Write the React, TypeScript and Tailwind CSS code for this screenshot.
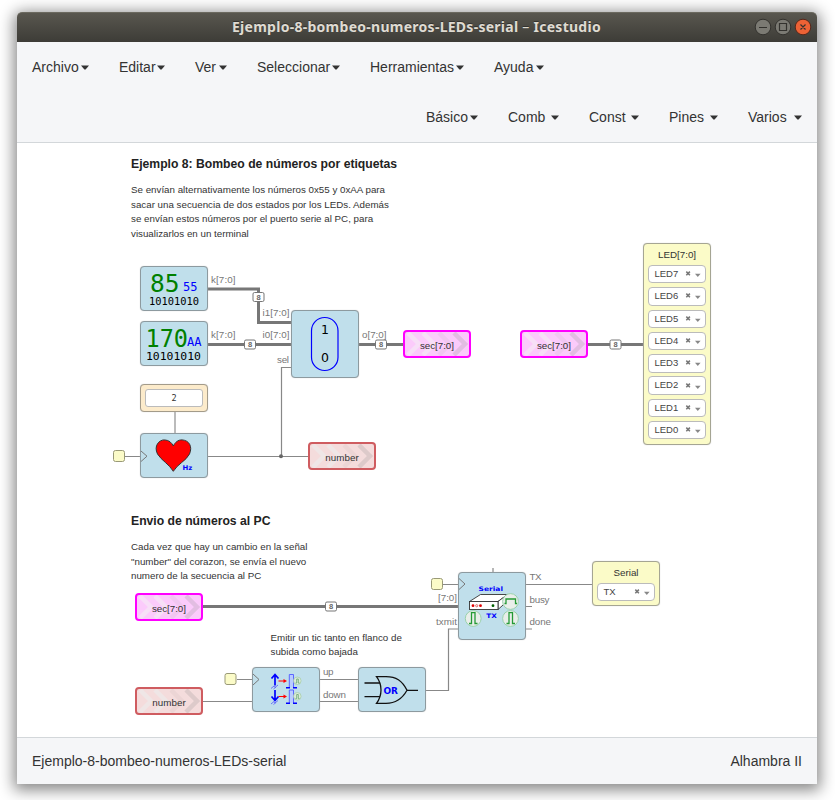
import React from "react";

const SANS = "font-['Liberation_Sans',Arial,sans-serif]";

function Menu({ label, className = "" }: { label: string; className?: string }) {
  return (
    <button className={`flex items-center whitespace-nowrap ${className}`}>
      <span>{label}</span>
      <svg width="8" height="5" className="-mt-px ml-auto block">
        <path d="M0 0.5H8L4.6 4.5H3.4Z" fill="#333" />
      </svg>
    </button>
  );
}

function Block({ className, children }: { className: string; children?: React.ReactNode }) {
  return (
    <div className={`absolute w-[68px] overflow-hidden rounded border border-[#8d9a9f] bg-[#c0dfeb] shadow-[0_0_1px_#c0c0c0] ${className}`}>
      {children}
    </div>
  );
}

function ConstValue({ dec, hex, x, hexX, decW, hexW, binX, binW }: { dec: string; hex: string; x: number; hexX: number; decW: number; hexW: number; binX: number; binW: number }) {
  return (
    <svg width="66" height="43" className="block font-['DejaVu_Sans_Mono','Noto_Sans',monospace]">
      <text x={x} y="24.7" fontSize="24" fill="#008000" textLength={decW} lengthAdjust="spacingAndGlyphs">{dec}</text>
      <text x={hexX} y="24" fontSize="12.5" fill="#0000ff" textLength={hexW} lengthAdjust="spacingAndGlyphs">{hex}</text>
      <text x={binX} y="38" fontSize="11" fill="#000" textLength={binW} lengthAdjust="spacingAndGlyphs">10101010</text>
    </svg>
  );
}

function Label({ text, tone, className }: { text: string; tone: "pink" | "red"; className: string }) {
  const pink = tone === "pink";
  return (
    <div className={`absolute h-7 w-[68px] overflow-hidden rounded border-2 ${pink ? "border-[#ff00ff] bg-[#fbcbfb]" : "border-[#cf5c60] bg-[#f4dcdc]"} ${className}`}>
      <svg width="64" height="24" className="block" fill="none" strokeWidth="4.5">
        <path d="M3 1L14 12L3 23M18 1L29 12L18 23" stroke={pink ? "#f7dff7" : "#efe6e6"} />
        <path d="M34 1L45 12L34 23" stroke={pink ? "#f1c6f1" : "#ecd5d5"} />
        <path d="M49 1L60 12L49 23" stroke={pink ? "#e2bde2" : "#ddcaca"} />
        <text x="32" y="17" textAnchor="middle" fontSize="9.8" fill="#333" textLength={pink ? 34 : 33.5}>{text}</text>
      </svg>
    </div>
  );
}

function Select({ value }: { value: string }) {
  return (
    <div className="flex h-[18.4px] w-[58px] items-center rounded border border-[#bbb] bg-white pl-[5.5px] pr-[3px] text-[9.5px] text-[#444]">
      <span className="flex-1">{value}</span>
      <svg width="17" height="8" className="block">
        <path d="M1.3 1.6l3.6 3.6M4.9 1.6L1.3 5.2" stroke="#777" strokeWidth="1.5" />
        <path d="M10 3.8h5.6L12.8 7z" fill="#888" />
      </svg>
    </div>
  );
}

function Pin({ x, y }: { x: number; y: number }) {
  return <rect x={x} y={y} width="11" height="11" rx="2" fill="#fbfbc8" stroke="#999977" />;
}

function Bus({ x, y }: { x: number; y: number }) {
  return (
    <g>
      <rect x={x - 5.5} y={y - 4.5} width="11" height="9" rx="1.5" fill="#fff" stroke="#777" />
      <text x={x} y={y + 2.8} fontSize="7.5" fontWeight="bold" fill="#666" textAnchor="middle">8</text>
    </g>
  );
}

const ports: [string, number, number, number][] = [
  ["k[7:0]", 211, 283, 24.5],
  ["k[7:0]", 211, 338, 24.5],
  ["i1[7:0]", 262.5, 316, 27],
  ["i0[7:0]", 262.5, 338, 27],
  ["sel", 277, 363, 12],
  ["o[7:0]", 362, 338, 24.5],
  ["TX", 529.5, 580, 12],
  ["busy", 529.5, 603, 20],
  ["done", 529.5, 625, 21.5],
  ["[7:0]", 438, 601, 19],
  ["txmit", 436, 625, 21],
  ["up", 323, 675, 10.5],
  ["down", 323, 698, 23],
];

function Wires() {
  return (
    <svg width="835" height="800" className="absolute inset-0">
      <g fill="none" stroke="#777" strokeWidth="3">
        <path d="M208 289H258.5V322.5H292M208 344.5H292M358 344.5H404M587 344.5H644M202 606.5H459" />
      </g>
      <g fill="none" stroke="#888" strokeWidth="1.2">
        <path d="M125 456.5H141M208 456.5H309M281.5 456.5V367.5H292M443 584.5H459M526 584.5H593M526 606.5H532M526 629H532M425 690.5H448.5V629H459M237 679.5H253M319 679.5H359M319 701.5H359M202 701.5H253M493 568V573" />
        <path d="M175 412V434" stroke="#aaa" strokeWidth="1.6" />
      </g>
      <circle cx="281" cy="456.3" r="2" fill="#666" />
      <Pin x={113.5} y={450.5} />
      <Pin x={431.5} y={578.5} />
      <Pin x={225} y={673.5} />
      <Bus x={258.5} y={297} />
      <Bus x={250} y={344.5} />
      <Bus x={381} y={344.5} />
      <Bus x={615.5} y={344.5} />
      <Bus x={331} y={606.5} />
      {ports.map(([t, x, y, w], i) => (
        <text key={i} x={x} y={y} fontSize="9.8" fill="#777" textLength={w}>{t}</text>
      ))}
    </svg>
  );
}

function MuxArt() {
  return (
    <svg width="66" height="66" className="block font-['DejaVu_Sans',sans-serif]">
      <rect x="19.5" y="6.5" width="26.5" height="53" rx="13.2" fill="none" stroke="#0000ff" strokeWidth="1.2" />
      <text x="33" y="23.2" fontSize="12.5" textAnchor="middle">1</text>
      <text x="33" y="51" fontSize="12.5" textAnchor="middle">0</text>
    </svg>
  );
}

function HeartArt() {
  return (
    <svg width="66" height="43" className="block font-['DejaVu_Sans',sans-serif]">
      <path d="M0 17L6 22.2L0 27.5" fill="none" stroke="#777" />
      <path d="M32.3 37.3C28 30 20.5 26.5 16.5 20C12.5 12 18 5.7 23.5 5.9C28 6 31 9 32.3 12C34 8.500 37 5.700 41 5.900C48 6.200 51.800 12.500 48.500 20C45 27 36.500 30 32.300 37.300Z" fill="#ff0000" stroke="#333" />
      <text x="41.500" y="35.500" fontSize="6.500" fontWeight="bold" fill="#0000ff" textLength="9.800" lengthAdjust="spacingAndGlyphs">Hz</text>
    </svg>
  );
}

function SerialArt() {
  return (
    <svg width="66" height="66" className="block font-['DejaVu_Sans',sans-serif]">
      <path d="M0 5.5L6 11L0 16.5" fill="none" stroke="#777" />
      <text x="19.5" y="17.8" fontSize="6.2" fontWeight="bold" fill="#0000ff" textLength="24.5" lengthAdjust="spacingAndGlyphs">Serial</text>
      <path d="M10.5 28.5L21.5 21.5H48.5L39 28.5Z" fill="#fff" stroke="#333" strokeWidth="0.9" />
      <path d="M39 28.5L48.5 21.5V28L39 36.5Z" fill="#fff" stroke="#333" strokeWidth="0.9" />
      <rect x="10.5" y="28.5" width="28.5" height="8" fill="#fff" stroke="#333" strokeWidth="0.9" />
      <circle cx="14" cy="32.7" r="1.4" fill="#e00000" />
      <circle cx="17.7" cy="32.7" r="1.1" fill="#fff" stroke="#c33" strokeWidth="0.7" />
      <circle cx="21.5" cy="32.7" r="1.4" fill="#e00000" />
      <circle cx="34" cy="32.7" r="1.4" fill="#006000" />
      <g fill="#e9eeea" stroke="#93cfa5" strokeWidth="0.9">
        <circle cx="51.5" cy="28.5" r="7.9" />
        <circle cx="14.2" cy="45.5" r="7.9" />
        <circle cx="51.5" cy="45.5" r="7.9" />
      </g>
      <g fill="none" stroke="#249a35" strokeWidth="1.3">
        <path d="M45.5 30.5H47V26H56.5V30.5H58" />
        <path d="M10 50.5H12.5V39.7H16V50.5H18.5" />
        <path d="M47.5 50.5H50V39.7H53.5V50.5H56" />
      </g>
      <text x="27.3" y="44.8" fontSize="6.2" fontWeight="bold" fill="#0000ff" textLength="10.5" lengthAdjust="spacingAndGlyphs">TX</text>
    </svg>
  );
}

function Edge({ y, down = false }: { y: number; down?: boolean }) {
  return (
    <g transform={`translate(0 ${y})`}>
      <path d={down ? "M22 1V11M18.5 7.5L22 11.5L25.5 7.5" : "M22 12V2M18.5 5L22 1L25.5 5"} fill="none" stroke="#0000ff" strokeWidth="1.7" />
      <path d="M18 15L21 12.5L22 14L25 11.5M20.5 15.5L23 13.5" fill="none" stroke="#5555ff" strokeWidth="0.8" />
      <path d="M25.5 7.5H32" stroke="#ff0000" strokeWidth="1.2" />
      <path d="M30.5 5.5L34 7.5L30.5 9.5Z" fill="#ff0000" />
      <path d="M36.3 14V1H40.5V14" fill="#b9ccff" stroke="#5c66ff" strokeWidth="1" />
      <path d="M33 14.3H37M40 14.3H44" stroke="#0000ff" strokeWidth="1.6" />
      <circle cx="44.3" cy="7.3" r="3.8" fill="#dceadb" stroke="#a7ceaa" strokeWidth="0.8" />
      <path d="M42.5 9.5H43.7V5.5H45.3V9.5H46.5" fill="none" stroke="#66a86d" strokeWidth="0.8" />
    </g>
  );
}

function EdgesArt() {
  return (
    <svg width="66" height="43" className="block">
      <path d="M0 6L6 11.5L0 17" fill="none" stroke="#777" />
      <Edge y={5.5} />
      <Edge y={21} down />
    </svg>
  );
}

function OrArt() {
  return (
    <svg width="66" height="43" className="block font-['DejaVu_Sans',sans-serif]">
      <g fill="none" stroke="#111" strokeWidth="1.3">
        <path d="M5.500 15H21M5.500 28.700H21M48 22.300H59" />
        <path d="M17.500 8.700H27C37 8.700 43 12.300 48 22.300C43 31.300 37 35.300 27 35.300H17.500C23.500 27 23.500 16.700 17.500 8.700Z" />
      </g>
      <text x="24.500" y="25.800" fontSize="9.300" fontWeight="bold" fill="#0000ff" textLength="14.500" lengthAdjust="spacingAndGlyphs">OR</text>
    </svg>
  );
}

const leds = ["LED7", "LED6", "LED5", "LED4", "LED3", "LED2", "LED1", "LED0"];

export default function App() {
  return (
    <div className={`h-[800px] w-[835px] overflow-hidden bg-white pl-[17px] pt-3 text-[#333] ${SANS}`}>
      <div className="flex h-[772px] w-[800px] flex-col rounded-t-[5px] bg-white shadow-[0_3px_15px_3px_rgba(0,0,0,0.48)]">
        <header className="flex h-[30px] shrink-0 items-center rounded-t-[5px] border-t border-[#6b695f] bg-gradient-to-b from-[#59574f] to-[#3d3c37]">
          <h1 className="ml-[215px] mt-[-2px] w-[375px] whitespace-nowrap font-['Noto_Sans',sans-serif] text-[14px] font-bold tracking-[0.27px] text-[#dfdbd2] [text-shadow:0_-1px_0_#33322e]">Ejemplo-8-bombeo-numeros-LEDs-serial <span className="font-normal">–</span> Icestudio</h1>
          <svg width="60" height="20" className="-mt-px ml-auto mr-[4px] block" fill="none" stroke="#33322e">
            <circle cx="10" cy="10" r="7.8" fill="#7b7a73" />
            <circle cx="30" cy="10" r="7.8" fill="#7b7a73" />
            <circle cx="50" cy="10" r="7.8" fill="#ed6235" stroke="#55281b" />
            <path d="M6 10.5H14M26.5 6.5H33.5V13.5H26.5ZM47.5 7.5L52.5 12.5M52.5 7.5L47.5 12.5" strokeWidth="1.2" />
          </svg>
        </header>
        <nav className="flex h-[101px] shrink-0 flex-col border-b border-[#d3d7da] bg-[#f5f6f8] text-[14px]">
          <div className="flex h-[50px] items-center pl-[15px] pt-px">
            <Menu label="Archivo" className="w-[57px]" />
            <Menu label="Editar" className="ml-[30px] w-[46px]" />
            <Menu label="Ver" className="ml-[30px] w-[32px]" />
            <Menu label="Seleccionar" className="ml-[30px] w-[83px]" />
            <Menu label="Herramientas" className="ml-[30px] w-[94px]" />
            <Menu label="Ayuda" className="ml-[30px] w-[50px]" />
          </div>
          <div className="flex h-[50px] items-center justify-end pr-[15px] pt-px">
            <Menu label="Básico" className="w-[52px]" />
            <Menu label="Comb" className="ml-[30px] w-[51px]" />
            <Menu label="Const" className="ml-[30px] w-[50px]" />
            <Menu label="Pines" className="ml-[30px] w-[49px]" />
            <Menu label="Varios" className="ml-[30px] w-[54px]" />
          </div>
        </nav>
        <main className="relative min-h-0 flex-1 overflow-hidden bg-white">
          <div className="absolute -left-[17px] -top-[143px] h-[800px] w-[835px]">
            <Wires />
            <section className="absolute left-[131px] top-[156px] whitespace-nowrap text-[9.77px] leading-[14.6px]">
              <h2 className="mb-[10px] text-[12.2px] font-bold leading-[17px] text-[#222]">Ejemplo 8: Bombeo de números por etiquetas</h2>
              <p>Se envían alternativamente los números 0x55 y 0xAA para</p>
              <p>sacar una secuencia de dos estados por los LEDs. Además</p>
              <p>se envían estos números por el puerto serie al PC, para</p>
              <p>visualizarlos en un terminal</p>
            </section>
            <section className="absolute left-[131px] top-[513px] whitespace-nowrap text-[9.77px] leading-[14.6px]">
              <h2 className="mb-[10px] text-[12.2px] font-bold leading-[17px] text-[#222]">Envio de números al PC</h2>
              <p>Cada vez que hay un cambio en la señal</p>
              <p>"number" del corazon, se envía el nuevo</p>
              <p>numero de la secuencia al PC</p>
            </section>
            <p className="absolute left-[270.5px] top-[630.5px] whitespace-nowrap text-[9.77px] leading-[14.4px]">
              Emitir un tic tanto en flanco de<br />subida como bajada
            </p>

            <Block className="left-[140px] top-[266px] h-[45px]">
              <ConstValue dec="85" hex="55" x={9} decW={29.5} hexX={42} hexW={14.5} binX={8} binW={50} />
            </Block>
            <Block className="left-[140px] top-[321px] h-[45px]">
              <ConstValue dec="170" hex="AA" x={4.5} decW={42.5} hexX={46} hexW={14.5} binX={5} binW={55} />
            </Block>
            <Block className="left-[291px] top-[310px] h-[68px]"><MuxArt /></Block>
            <Block className="left-[140px] top-[433px] h-[45px]"><HeartArt /></Block>
            <Block className="left-[458px] top-[572px] h-[68px]"><SerialArt /></Block>
            <Block className="left-[252px] top-[667px] h-[45px]"><EdgesArt /></Block>
            <Block className="left-[358px] top-[667px] h-[45px]"><OrArt /></Block>

            <div className="absolute left-[140px] top-[384px] h-7 w-[68px] rounded border border-[#a39b8a] bg-[#fcebcb] p-1 shadow-[0_0_1px_#c0c0c0]">
              <div className="flex h-[18px] items-center justify-center rounded-[3px] border border-[#bbb] bg-white font-['DejaVu_Sans_Mono',monospace] text-[8.5px]">2</div>
            </div>

            <Label text="sec[7:0]" tone="pink" className="left-[403px] top-[330px]" />
            <Label text="sec[7:0]" tone="pink" className="left-[520px] top-[330px]" />
            <Label text="sec[7:0]" tone="pink" className="left-[135px] top-[593px]" />
            <Label text="number" tone="red" className="left-[308px] top-[442px]" />
            <Label text="number" tone="red" className="left-[135px] top-[687px]" />

            <div className="absolute left-[643px] top-[243px] h-[202px] w-[68px] rounded border border-[#a5a593] bg-[#fbfbc8] pl-1 shadow-[0_0_1px_#c0c0c0]">
              <div className="h-[21px] pr-1 pt-[4px] text-center text-[9.8px] leading-[14px]">LED[7:0]</div>
              <div className="flex flex-col gap-[3.9px]">
                {leds.map((led) => <Select key={led} value={led} />)}
              </div>
            </div>
            <div className="absolute left-[592px] top-[561px] h-[45px] w-[68px] rounded border border-[#a5a593] bg-[#fbfbc8] pl-1 shadow-[0_0_1px_#c0c0c0]">
              <div className="h-[21px] pr-1 pt-[4px] text-center text-[9.8px] leading-[14px]">Serial</div>
              <Select value="TX" />
            </div>
          </div>
        </main>
        <footer className="flex h-[47px] shrink-0 items-center justify-between border-t border-[#d3d7da] bg-[#f5f6f8] px-[15px] pt-px text-[14px]">
          <span>Ejemplo-8-bombeo-numeros-LEDs-serial</span>
          <span>Alhambra II</span>
        </footer>
      </div>
    </div>
  );
}
